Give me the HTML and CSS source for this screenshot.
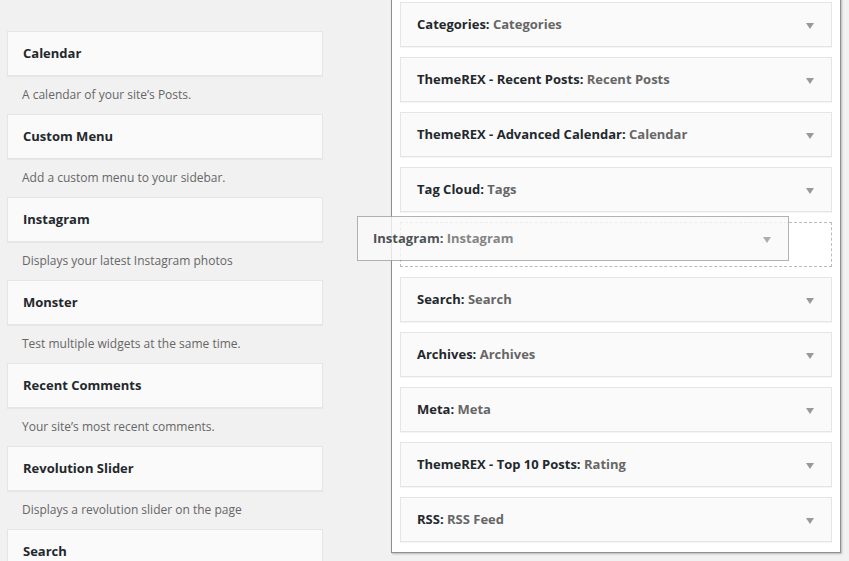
FILE: index.html
```html
<!DOCTYPE html>
<html>
<head>
<meta charset="utf-8">
<link rel="stylesheet" href="styles.css">
</head>
<body>
<div class="page">
  <div class="available">
    <div class="widget"><div class="widget-top"><h3>Calendar</h3></div><div class="desc">A calendar of your site’s Posts.</div></div>
    <div class="widget"><div class="widget-top"><h3>Custom Menu</h3></div><div class="desc">Add a custom menu to your sidebar.</div></div>
    <div class="widget"><div class="widget-top"><h3>Instagram</h3></div><div class="desc">Displays your latest Instagram photos</div></div>
    <div class="widget"><div class="widget-top"><h3>Monster</h3></div><div class="desc">Test multiple widgets at the same time.</div></div>
    <div class="widget"><div class="widget-top"><h3>Recent Comments</h3></div><div class="desc">Your site’s most recent comments.</div></div>
    <div class="widget"><div class="widget-top"><h3>Revolution Slider</h3></div><div class="desc">Displays a revolution slider on the page</div></div>
    <div class="widget"><div class="widget-top"><h3>Search</h3></div><div class="desc">A search form for your site.</div></div>
  </div>
  <div class="sidebar">
    <div class="swidget"><h3>Categories: <span class="in">Categories</span></h3><span class="arrow"></span></div>
    <div class="swidget"><h3>ThemeREX - Recent Posts: <span class="in">Recent Posts</span></h3><span class="arrow"></span></div>
    <div class="swidget"><h3>ThemeREX - Advanced Calendar: <span class="in">Calendar</span></h3><span class="arrow"></span></div>
    <div class="swidget"><h3>Tag Cloud: <span class="in">Tags</span></h3><span class="arrow"></span></div>
    <div class="placeholder"></div>
    <div class="swidget"><h3>Search: <span class="in">Search</span></h3><span class="arrow"></span></div>
    <div class="swidget"><h3>Archives: <span class="in">Archives</span></h3><span class="arrow"></span></div>
    <div class="swidget"><h3>Meta: <span class="in">Meta</span></h3><span class="arrow"></span></div>
    <div class="swidget"><h3>ThemeREX - Top 10 Posts: <span class="in">Rating</span></h3><span class="arrow"></span></div>
    <div class="swidget"><h3>RSS: <span class="in">RSS Feed</span></h3><span class="arrow"></span></div>
  </div>
</div>
<div class="swidget dragging"><h3>Instagram: <span class="in">Instagram</span></h3><span class="arrow"></span></div>
</body>
</html>
```
FILE: styles.css
```css
html, body {
  margin: 0;
  padding: 0;
  background: #f1f1f1;
  height: 561px;
  overflow: hidden;
}
body {
  font-family: "Open Sans", "Noto Sans", sans-serif;
  font-size: 13px;
  color: #444;
  position: relative;
}
.page {
  display: flex;
  align-items: flex-start;
}
.available {
  width: 316px;
  padding: 31px 0 0 7px;
  flex: none;
}
.widget-top {
  background: #fafafa;
  border: 1px solid #e5e5e5;
  box-shadow: 0 1px 1px rgba(0,0,0,0.04);
  height: 43px;
}
h3 {
  margin: 0;
  padding: 15px;
  font-size: 13px;
  line-height: 13px;
  font-weight: 700;
  color: #23282d;
  white-space: nowrap;
}
.desc {
  padding: 9px 15px;
  font-size: 12px;
  line-height: 20px;
  color: #666;
}
.sidebar {
  flex: none;
  margin-left: 68px;
  margin-top: -10px;
  width: 450px;
  box-sizing: border-box;
  background: #fff;
  border: 1px solid #8c8f94;
  box-shadow: 1px 1px 2px rgba(0,0,0,0.25);
  padding: 11px 8px 10px 8px;
  display: flex;
  flex-direction: column;
  gap: 10px;
}
.swidget {
  position: relative;
  box-sizing: border-box;
  height: 45px;
  background: #fafafa;
  border: 1px solid #e5e5e5;
  box-shadow: 0 1px 1px rgba(0,0,0,0.04);
}
.swidget h3 {
  padding: 15px 15px 15px 16px;
}
.in {
  color: #666;
}
.arrow {
  position: absolute;
  right: 17px;
  top: 20px;
  width: 0;
  height: 0;
  border-left: 4px solid transparent;
  border-right: 4px solid transparent;
  border-top: 6px solid #999;
}
.placeholder {
  box-sizing: border-box;
  height: 45px;
  border: 1px dashed #bbb;
}
.dragging {
  position: absolute;
  left: 357px;
  top: 216px;
  width: 432px;
  border-color: #a0a0a0;
  opacity: 0.8;
  box-shadow: none;
}
.dragging h3 {
  padding-left: 15px;
}
```
